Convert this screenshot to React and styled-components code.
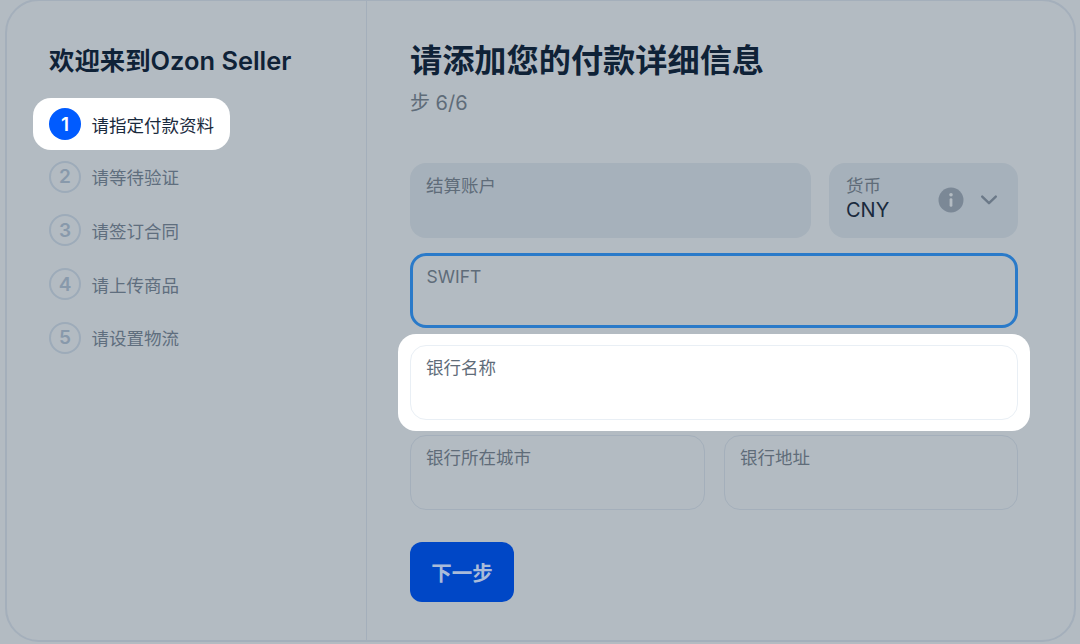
import React from 'react';
import styled, { createGlobalStyle } from 'styled-components';

const GlobalStyle = createGlobalStyle`
  html, body {
    margin: 0;
    padding: 0;
    background: #b3bbc2;
  }
  body {
    font-family: Inter, "Noto Sans CJK SC", sans-serif;
    color: #0f2237;
  }
  * {
    box-sizing: border-box;
  }
`;

const Page = styled.div`
  width: 1080px;
  height: 644px;
  padding: 0 4px 2px 5px;
  overflow: hidden;
`;

const Card = styled.div`
  display: flex;
  height: 643px;
  margin-top: -1px;
  border: 2px solid #a4afbb;
  border-radius: 34px;
`;

const Sidebar = styled.aside`
  width: 360px;
  flex-shrink: 0;
  padding: 42px 0 0 42px;
  border-right: 1px solid #a4afbb;
`;

const WelcomeTitle = styled.h2`
  margin: 0 0 28px;
  font-size: 25.4px;
  line-height: 36px;
  font-weight: 600;
  color: #0f2237;
`;

const StepList = styled.ul`
  display: flex;
  flex-direction: column;
  gap: 21.7px;
  margin: 0;
  padding: 0;
  list-style: none;
`;

const StepItem = styled.li`
  display: flex;
  align-items: center;
  gap: 10.5px;
  height: 32px;
  font-size: 17.5px;
  color: ${props => (props.$active ? '#1a2a3d' : '#5f6e7e')};
  ${props => props.$active && `
    width: 197px;
    height: 52px;
    margin: -9px 0 -11px -16px;
    padding-left: 16px;
    background: #fff;
    border-radius: 18px;
  `}
`;

const StepNumber = styled.span`
  display: flex;
  align-items: center;
  justify-content: center;
  width: 32px;
  height: 32px;
  flex-shrink: 0;
  border-radius: 50%;
  font-size: 19px;
  font-weight: 600;
  color: ${props => (props.$active ? '#fff' : '#8899ab')};
  background: ${props => (props.$active ? '#005bff' : 'transparent')};
  border: ${props => (props.$active ? 'none' : '2px solid #9dabb9')};
`;

const Main = styled.main`
  flex: 1;
  padding: 37px 56px 0 43px;
`;

const Heading = styled.h1`
  margin: 0;
  font-size: 32.2px;
  line-height: 46px;
  font-weight: 600;
  color: #0f2237;
`;

const StepCounter = styled.div`
  margin: 6px 0 47px;
  font-size: 20px;
  line-height: 26px;
  color: #5f6c79;
`;

const Form = styled.form`
  display: flex;
  flex-direction: column;
`;

const Row = styled.div`
  display: flex;
  gap: ${props => props.$gap || 18}px;
  margin-bottom: ${props => props.$mb ?? 15.5}px;
`;

const Field = styled.div`
  flex: ${props => props.$flex || 1};
  min-width: 0;
  height: 74.5px;
  padding: ${props => 12.5 - (props.$bw || 1.5)}px ${props => 16.5 - (props.$bw || 1.5)}px;
  border-radius: 16px;
  font-size: 17.5px;
  line-height: 22px;
  color: #5f6c79;
  background: ${props => props.$bg || 'transparent'};
  border: ${props => props.$bw || 1.5}px solid ${props => props.$border || 'transparent'};
`;

const Spotlight = styled.div`
  flex: 1;
  margin: -11px -12px;
  padding: 11px 12px;
  background: #fff;
  border-radius: 18px;
`;

const SelectField = styled(Field)`
  display: flex;
  align-items: center;
  justify-content: space-between;
  padding: 0 18px 2px 16px;
`;

const SelectText = styled.div`
  display: flex;
  flex-direction: column;
`;

const SelectValue = styled.span`
  font-size: 20px;
  line-height: 26px;
  color: #1a2a3d;
`;

const SelectIcons = styled.div`
  display: flex;
  align-items: center;
  gap: 15px;
  margin-top: 2px;
`;

const NextButton = styled.button`
  display: block;
  width: 104px;
  height: 59.5px;
  margin-top: 32.5px;
  border: none;
  border-radius: 12px;
  background: #0047c6;
  color: #a9bbd9;
  font-family: inherit;
  font-size: 20.5px;
  font-weight: 700;
`;

const InfoIcon = () => (
  <svg width="26" height="26" viewBox="0 0 26 26">
    <circle cx="13" cy="13" r="12.5" fill="#7b8896" />
    <circle cx="13" cy="7.8" r="1.8" fill="#b3bbc2" />
    <rect x="11.6" y="11.2" width="2.8" height="8.6" rx="1.4" fill="#b3bbc2" />
  </svg>
);

const ChevronIcon = () => (
  <svg width="20" height="20" viewBox="0 0 20 20" fill="none">
    <path d="M3.2 6.6L10 13.2l6.8-6.6" stroke="#6b7988" strokeWidth="2.4" strokeLinecap="round" strokeLinejoin="round" />
  </svg>
);

const steps = ['请指定付款资料', '请等待验证', '请签订合同', '请上传商品', '请设置物流'];

export default function App() {
  return (
    <Page>
      <GlobalStyle />
      <Card>
        <Sidebar>
          <WelcomeTitle>欢迎来到Ozon Seller</WelcomeTitle>
          <StepList>
            {steps.map((step, i) => (
              <StepItem key={step} $active={i === 0}>
                <StepNumber $active={i === 0}>{i + 1}</StepNumber>
                {step}
              </StepItem>
            ))}
          </StepList>
        </Sidebar>
        <Main>
          <Heading>请添加您的付款详细信息</Heading>
          <StepCounter>步 6/6</StepCounter>
          <Form>
            <Row>
              <Field $flex="0 0 401px" $bg="#a6b1bb">结算账户</Field>
              <SelectField $bg="#a6b1bb">
                <SelectText>
                  货币
                  <SelectValue>CNY</SelectValue>
                </SelectText>
                <SelectIcons>
                  <InfoIcon />
                  <ChevronIcon />
                </SelectIcons>
              </SelectField>
            </Row>
            <Row $mb={17.5}>
              <Field $border="#2a7ac9" $bw={3}>SWIFT</Field>
            </Row>
            <Row>
              <Spotlight>
                <Field $border="#e9eff5">银行名称</Field>
              </Spotlight>
            </Row>
            <Row $gap={19} $mb={0}>
              <Field $flex="0 0 295px" $border="#a4afbb">银行所在城市</Field>
              <Field $border="#a4afbb">银行地址</Field>
            </Row>
            <NextButton type="button">下一步</NextButton>
          </Form>
        </Main>
      </Card>
    </Page>
  );
}
